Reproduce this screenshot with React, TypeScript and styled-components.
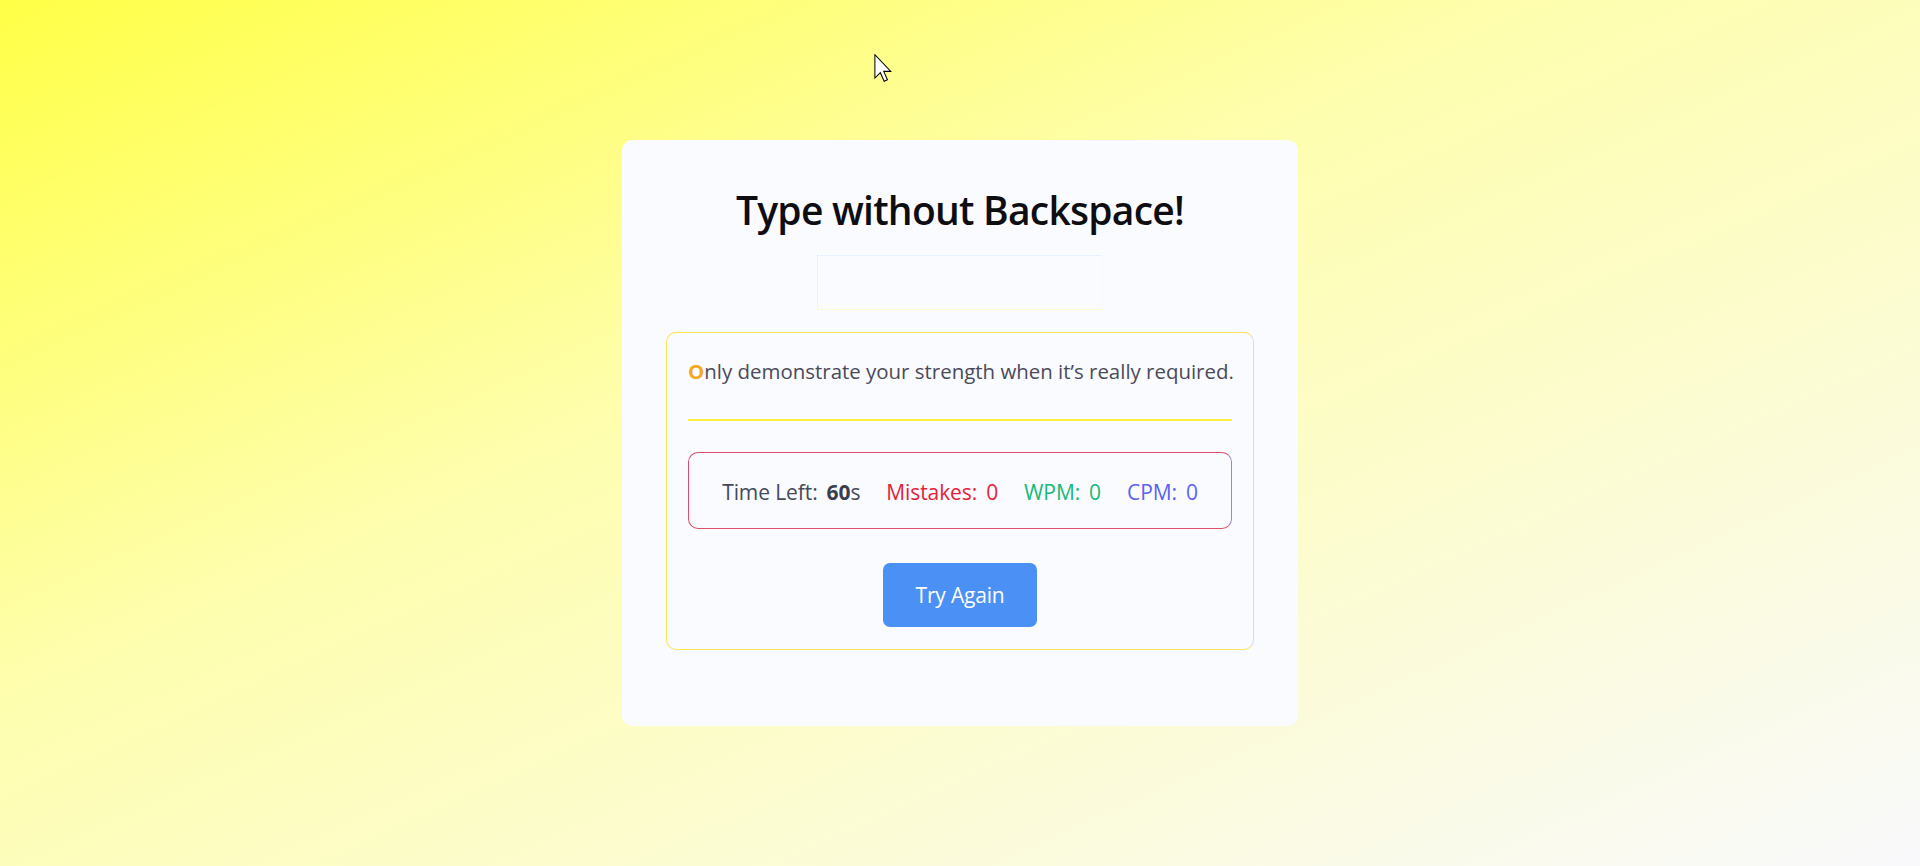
import React from "react";
import styled, { createGlobalStyle } from "styled-components";

const GlobalStyle = createGlobalStyle`
  html, body {
    margin: 0;
    padding: 0;
  }
  body {
    min-height: 100vh;
    font-family: "Open Sans", "Noto Sans", Arial, sans-serif;
    background: linear-gradient(to bottom right, #ffff47 0%, #fefeae 40%, #f9f9fc 100%);
    background-attachment: fixed;
  }
`;

const Page = styled.main`
  position: relative;
  min-height: 866px;
  display: flex;
  justify-content: center;
  align-items: flex-start;
  padding-top: 140px;
  box-sizing: border-box;
`;

const Card = styled.section`
  width: 676px;
  box-sizing: border-box;
  background: #fafbfe;
  border-radius: 10px;
  padding: 46px 44px 76px;
  display: flex;
  flex-direction: column;
  align-items: center;
`;

const Title = styled.h1`
  margin: 0;
  font-size: 39px;
  line-height: 48px;
  font-weight: 600;
  color: #0d0d12;
  letter-spacing: -0.75px;
`;

const HiddenInput = styled.input`
  margin-top: 21px;
  width: 286px;
  height: 55px;
  box-sizing: border-box;
  background: transparent;
  border: 1px dotted;
  border-color: #dfe8f6 #f7f7f2 #faf6cf #dfe8f6;
  outline: none;
`;

const Board = styled.div`
  margin-top: 22px;
  width: 100%;
  box-sizing: border-box;
  border: 1px solid #ffe35a;
  border-right-color: #d8d8ee;
  border-radius: 10px;
  padding: 23px 21px 22px;
  display: flex;
  flex-direction: column;
  align-items: center;
`;

const Quote = styled.p`
  margin: 0;
  width: 100%;
  font-size: 20.45px;
  line-height: 30px;
  color: #4a4a58;
  padding-bottom: 33px;
  border-bottom: 2px solid #ffeb3b;
  white-space: nowrap;
`;

const Current = styled.span`
  color: #f5a81c;
  font-weight: 700;
`;

const Stats = styled.div`
  margin-top: 31px;
  width: 100%;
  height: 77px;
  box-sizing: border-box;
  border: 1px solid #db4f6a;
  border-right-color: #a487b6;
  border-radius: 10px;
  display: flex;
  justify-content: center;
  align-items: center;
  gap: 26px;
  font-size: 21px;
  padding-top: 2px;
`;

const Stat = styled.span<{ $color: string }>`
  display: inline-flex;
  align-items: baseline;
  gap: 9px;
  color: ${(p) => p.$color};
  letter-spacing: -0.1px;
`;

const Strong = styled.b`
  font-weight: 700;
  color: #3a3f4e;
`;

const Button = styled.button`
  margin-top: 34px;
  width: 154px;
  height: 64px;
  border: none;
  border-radius: 7px;
  background: #4a90f5;
  color: #ffffff;
  font-family: inherit;
  font-size: 21px;
  letter-spacing: -0.2px;
  cursor: pointer;
`;

const Cursor = styled.svg`
  position: absolute;
  left: 874px;
  top: 54px;
  width: 18px;
  height: 28px;
`;

export default function App() {
  return (
    <>
      <GlobalStyle />
      <Page>
        <Card>
          <Title>Type without Backspace!</Title>
          <HiddenInput aria-label="typing input" />
          <Board>
            <Quote>
              <Current>O</Current>nly demonstrate your strength when it’s really required.
            </Quote>
            <Stats>
              <Stat $color="#454a58">
                <span>Time Left:</span>
                <span>
                  <Strong>60</Strong>s
                </span>
              </Stat>
              <Stat $color="#e4223a">
                <span>Mistakes:</span>
                <span>0</span>
              </Stat>
              <Stat $color="#17b97a">
                <span>WPM:</span>
                <span>0</span>
              </Stat>
              <Stat $color="#5b63f0">
                <span>CPM:</span>
                <span>0</span>
              </Stat>
            </Stats>
            <Button>Try Again</Button>
          </Board>
        </Card>
        <Cursor viewBox="0 0 12 19">
          <path
            d="M0.5 0.5 V16.3 L4.2 12.7 L6.8 18.5 L9 17.5 L6.5 11.8 H11.3 Z"
            fill="#ffffff"
            stroke="#000000"
            strokeWidth="0.7"
            strokeLinejoin="miter"
          />
        </Cursor>
      </Page>
    </>
  );
}
